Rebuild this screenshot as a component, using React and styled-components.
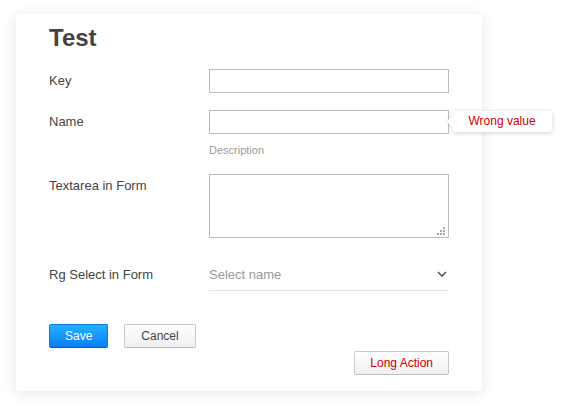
import React from "react";
import styled, { createGlobalStyle } from "styled-components";

const Global = createGlobalStyle`
  html, body { margin: 0; padding: 0; background: #fff; }
  body { font-family: "Liberation Sans", Arial, sans-serif; color: #444; }
  * { box-sizing: border-box; }
`;

const Page = styled.div`
  padding: 14px 0 19px 16px;
`;

const Card = styled.div`
  width: 466px;
  background: #fff;
  border-radius: 3px;
  box-shadow: 0 2px 14px rgba(40, 50, 70, 0.12);
  padding: 10px 33px 16px 33px;
`;

const Title = styled.h1`
  margin: 0 0 17px;
  font-size: 24px;
  line-height: 28px;
  font-weight: bold;
  color: #444;
`;

const Row = styled.div`
  display: grid;
  grid-template-columns: 160px 240px;
  align-items: ${(p) => (p.$center ? "center" : "start")};
  margin-bottom: ${(p) => p.$mb ?? 17}px;
`;

const Label = styled.label`
  font-size: 13px;
  line-height: 24px;
  color: #444;
`;

const Field = styled.div`
  position: relative;
  display: flex;
  flex-direction: column;
`;

const Input = styled.input`
  width: 240px;
  height: 24px;
  border: 1px solid #bdbdbd;
  padding: 0 6px;
  font: 13px "Liberation Sans", Arial, sans-serif;
  outline: none;
  background: #fff;
`;

const Description = styled.div`
  margin-top: 9px;
  font-size: 11px;
  line-height: 14px;
  color: #999;
`;

const TextArea = styled.textarea`
  display: block;
  width: 240px;
  height: 64px;
  border: 1px solid #bdbdbd;
  resize: none;
  outline: none;
  font: 13px "Liberation Sans", Arial, sans-serif;
  padding: 4px 6px;
  margin: 0;
`;

const Grip = styled.svg`
  position: absolute;
  right: 4px;
  bottom: 3px;
`;

const Select = styled.div`
  height: 33px;
  border-bottom: 1px solid #e2e2e2;
  display: flex;
  align-items: center;
  justify-content: space-between;
  padding: 0 2px 0 0;
  font-size: 13px;
  color: #999;
`;

const Tooltip = styled.div`
  position: absolute;
  left: calc(100% + 3px);
  top: 1px;
  width: 100px;
  height: 21px;
  background: #fff;
  border-radius: 3px;
  box-shadow: 0 1px 5px rgba(0, 0, 0, 0.18);
  color: #cc0000;
  font-size: 12px;
  line-height: 21px;
  text-align: center;
  white-space: nowrap;
  &::before {
    content: "";
    position: absolute;
    left: -4px;
    top: 7px;
    width: 7px;
    height: 7px;
    background: #fff;
    transform: rotate(45deg);
    box-shadow: -1px 1px 2px rgba(0, 0, 0, 0.08);
  }
`;

const Buttons = styled.div`
  display: flex;
  gap: 16px;
  margin-top: 33px;
`;

const RightRow = styled.div`
  display: flex;
  justify-content: flex-end;
  width: 400px;
  margin-top: 3px;
`;

const Button = styled.button`
  height: 24px;
  padding: 0 ${(p) => p.$px ?? 15}px;
  border-radius: 2px;
  font: 12px "Liberation Sans", Arial, sans-serif;
  cursor: pointer;
  border: 1px solid ${(p) => (p.$primary ? "#0a78e0" : "#c8c8c8")};
  border-bottom-color: ${(p) => (p.$primary ? "#0060c0" : "#bcbcbc")};
  background: ${(p) =>
    p.$primary
      ? "linear-gradient(#22b2ff, #0a7df5)"
      : "linear-gradient(#ffffff, #efefef)"};
  color: ${(p) => (p.$primary ? "#fff" : p.$danger ? "#cc0000" : "#444")};
`;

export default function App() {
  return (
    <>
      <Global />
      <Page>
        <Card>
          <Title>Test</Title>
          <Row>
            <Label>Key</Label>
            <Field>
              <Input />
            </Field>
          </Row>
          <Row>
            <Label>Name</Label>
            <Field>
              <Input />
              <Tooltip>Wrong value</Tooltip>
              <Description>Description</Description>
            </Field>
          </Row>
          <Row $mb={20}>
            <Label>Textarea in Form</Label>
            <Field>
              <TextArea />
              <Grip width="8" height="8" viewBox="0 0 8 8">
                <g fill="#a8a8a8">
                  <rect x="6" y="0" width="2" height="2" />
                  <rect x="3" y="3" width="2" height="2" />
                  <rect x="6" y="3" width="2" height="2" />
                  <rect x="0" y="6" width="2" height="2" />
                  <rect x="3" y="6" width="2" height="2" />
                  <rect x="6" y="6" width="2" height="2" />
                </g>
              </Grip>
            </Field>
          </Row>
          <Row $center $mb={0}>
            <Label>Rg Select in Form</Label>
            <Select>
              <span>Select name</span>
              <svg width="10" height="6" viewBox="0 0 10 6">
                <path d="M1 1 L5 5 L9 1" fill="none" stroke="#555" strokeWidth="1.6" />
              </svg>
            </Select>
          </Row>
          <Buttons>
            <Button $primary>Save</Button>
            <Button $px={16}>Cancel</Button>
          </Buttons>
          <RightRow>
            <Button $danger>Long Action</Button>
          </RightRow>
        </Card>
      </Page>
    </>
  );
}
